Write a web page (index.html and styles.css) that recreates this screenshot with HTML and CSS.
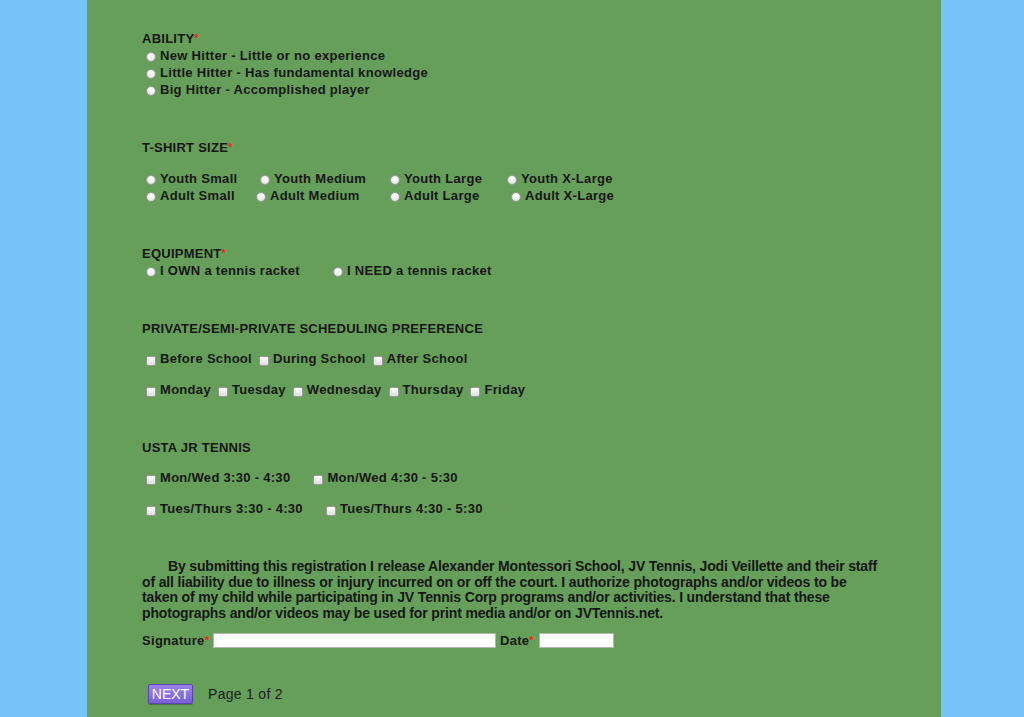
FILE: index.html
```html
<!DOCTYPE html>
<html>
<head>
<meta charset="utf-8">
<link rel="stylesheet" href="styles.css">
</head>
<body>
<div class="panel">
  <form class="form">
    <section class="group g-ability">
      <div class="heading">ABILITY<span class="req">*</span></div>
      <label class="opt row"><input type="radio" name="ability" class="radio">New Hitter - Little or no experience</label>
      <label class="opt row"><input type="radio" name="ability" class="radio">Little Hitter - Has fundamental knowledge</label>
      <label class="opt row"><input type="radio" name="ability" class="radio">Big Hitter - Accomplished player</label>
    </section>

    <section class="group">
      <div class="heading">T-SHIRT SIZE<span class="req">*</span></div>
      <div class="shirt-grid">
        <label class="opt"><input type="radio" name="size" class="radio">Youth Small</label>
        <label class="opt"><input type="radio" name="size" class="radio">Youth Medium</label>
        <label class="opt"><input type="radio" name="size" class="radio">Youth Large</label>
        <label class="opt"><input type="radio" name="size" class="radio">Youth X-Large</label>
        <label class="opt"><input type="radio" name="size" class="radio">Adult Small</label>
        <label class="opt shift-l"><input type="radio" name="size" class="radio">Adult Medium</label>
        <label class="opt"><input type="radio" name="size" class="radio">Adult Large</label>
        <label class="opt shift-r"><input type="radio" name="size" class="radio">Adult X-Large</label>
      </div>
    </section>

    <section class="group g-equip">
      <div class="heading">EQUIPMENT<span class="req">*</span></div>
      <div class="equip-row">
        <label class="opt equip-own"><input type="radio" name="equip" class="radio">I OWN a tennis racket</label>
        <label class="opt"><input type="radio" name="equip" class="radio">I NEED a tennis racket</label>
      </div>
    </section>

    <section class="group">
      <div class="heading">PRIVATE/SEMI-PRIVATE SCHEDULING PREFERENCE</div>
      <div class="check-row">
        <label class="opt"><input type="checkbox" class="check">Before School</label>
        <label class="opt"><input type="checkbox" class="check">During School</label>
        <label class="opt"><input type="checkbox" class="check">After School</label>
      </div>
      <div class="check-row">
        <label class="opt"><input type="checkbox" class="check">Monday</label>
        <label class="opt"><input type="checkbox" class="check">Tuesday</label>
        <label class="opt"><input type="checkbox" class="check">Wednesday</label>
        <label class="opt"><input type="checkbox" class="check">Thursday</label>
        <label class="opt"><input type="checkbox" class="check">Friday</label>
      </div>
    </section>

    <section class="group">
      <div class="heading">USTA JR TENNIS</div>
      <div class="check-row wide">
        <label class="opt"><input type="checkbox" class="check">Mon/Wed 3:30 - 4:30</label>
        <label class="opt"><input type="checkbox" class="check">Mon/Wed 4:30 - 5:30</label>
      </div>
      <div class="check-row wide">
        <label class="opt"><input type="checkbox" class="check">Tues/Thurs 3:30 - 4:30</label>
        <label class="opt"><input type="checkbox" class="check">Tues/Thurs 4:30 - 5:30</label>
      </div>
    </section>

    <section class="group g-release">
      <p class="release">By submitting this registration I release Alexander Montessori School, JV Tennis, Jodi Veillette and their staff of all liability due to illness or injury incurred on or off the court. I authorize photographs and/or videos to be taken of my child while participating in JV Tennis Corp programs and/or activities. I understand that these photographs and/or videos may be used for print media and/or on JVTennis.net.</p>
      <div class="sign-row">
        <label class="field-label">Signature<span class="req">*</span></label>
        <input type="text" class="text-input sig">
        <label class="field-label">Date<span class="req">*</span></label>
        <input type="text" class="text-input date">
      </div>
    </section>

    <div class="pager">
      <button type="button" class="next">NEXT</button>
      <span class="page-info">Page 1 of 2</span>
    </div>
  </form>
</div>
</body>
</html>
```

FILE: styles.css
```css
html, body {
  margin: 0;
  padding: 0;
}
body {
  background: #78c4fa;
  font-family: "Liberation Sans", Arial, Helvetica, sans-serif;
  color: #161616;
}
.panel {
  width: 854px;
  min-height: 717px;
  margin-left: 87px;
  background: #669f59;
  box-sizing: border-box;
  padding: 31px 0 0 55px;
}
.form {
  margin: 0;
}
.group {
  margin-top: 42px;
}
.g-ability {
  margin-top: 0;
}
.heading {
  font-size: 13px;
  letter-spacing: 0.25px;
  font-weight: bold;
  line-height: 15px;
  height: 15px;
  padding-bottom: 1px;
}
.req {
  color: #ff1a1a;
  font-size: 11px;
  vertical-align: 1px;
  letter-spacing: 0;
}
.opt {
  display: flex;
  align-items: center;
  font-size: 13px;
  letter-spacing: 0.3px;
  font-weight: bold;
  line-height: 17px;
  height: 17px;
  white-space: nowrap;
}
.radio {
  -webkit-appearance: none;
  appearance: none;
  width: 10px;
  height: 10px;
  margin: 3px 4px 0 4px;
  border-radius: 50%;
  border: 1px solid #9a9a9a;
  box-sizing: border-box;
  background: radial-gradient(circle at 50% 35%, #ffffff 0%, #f2f2f2 45%, #cfcfcf 100%);
  flex: none;
}
.check {
  -webkit-appearance: none;
  appearance: none;
  width: 10px;
  height: 10px;
  margin: 4px 4px 0 4px;
  border-radius: 2px;
  border: 1px solid #9a9a9a;
  box-sizing: border-box;
  background: linear-gradient(#ffffff, #dedede);
  flex: none;
}
.shirt-grid {
  margin-top: 14px;
  display: grid;
  grid-template-columns: 114px 130px 117px auto;
}
.shift-l {
  margin-left: -4px;
}
.shift-r {
  margin-left: 4px;
}
.equip-row {
  display: flex;
}
.equip-own {
  width: 187px;
}
.check-row {
  display: flex;
  gap: 3px;
  margin-top: 14px;
}
.heading + .check-row {
  margin-top: 13px;
}
.check-row.wide {
  gap: 19px;
}
.release {
  margin: 0;
  font-size: 14px;
  letter-spacing: -0.15px;
  font-weight: bold;
  line-height: 15.5px;
  text-indent: 26px;
  width: 740px;
}
.sign-row {
  margin-top: 11px;
  display: flex;
  align-items: center;
  height: 17px;
}
.field-label {
  font-size: 13px;
  letter-spacing: 0.3px;
  font-weight: bold;
}
.text-input {
  height: 15px;
  box-sizing: border-box;
  border: 1px solid #b5b5b5;
  background: #fff;
  margin: 0 4px 0 4px;
  padding: 0;
}
.sig {
  width: 283px;
}
.date {
  width: 75px;
  margin-left: 5px;
}
.pager {
  margin-top: 35px;
  display: flex;
  align-items: center;
  padding-left: 6px;
}
.next {
  width: 45px;
  height: 20px;
  padding: 0;
  border: 1px solid #5b45b3;
  border-radius: 2px;
  background: linear-gradient(#9c84ea, #7a5fd6);
  color: #fff;
  font-family: "Liberation Sans", Arial, sans-serif;
  font-size: 14px;
  line-height: 18px;
  box-shadow: 0 1px 1px rgba(0,0,0,0.3);
}
.page-info {
  margin-left: 15px;
  font-size: 14px;
  letter-spacing: 0.3px;
  color: #1a1a1a;
}
```
